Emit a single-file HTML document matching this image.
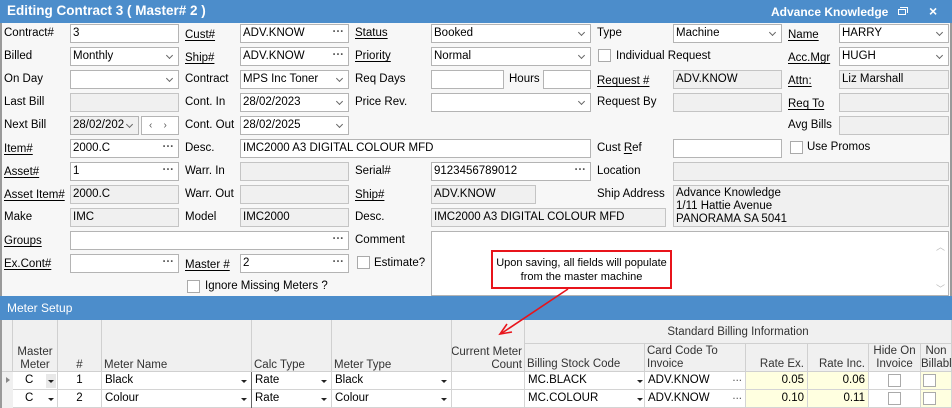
<!DOCTYPE html>
<html><head><meta charset="utf-8">
<style>
*{box-sizing:border-box;margin:0;padding:0}
body{width:952px;height:408px;overflow:hidden;background:#f7f7f7;font-family:"Liberation Sans",sans-serif;font-size:11.5px;color:#000;position:relative}
.a{position:absolute;white-space:nowrap}
.t{position:absolute;line-height:18px;white-space:nowrap}
.u{text-decoration:underline;text-underline-offset:2px}
.b{position:absolute;height:19px;background:#fff;border:1px solid #b4b4b4;line-height:17px;padding-left:2px;white-space:nowrap;overflow:hidden}
.g{background:#f0f0f0;border-color:#c4c4c4}
.dd::after{content:"";position:absolute;right:6px;top:5px;width:4px;height:4px;border-right:1.3px solid #666;border-bottom:1.3px solid #666;transform:rotate(45deg)}
.el::after{content:"···";position:absolute;right:4px;top:-1px;color:#555;font-weight:bold;letter-spacing:0px}
.cb{position:absolute;width:13px;height:13px;background:#fff;border:1px solid #aaa}
.h{position:absolute;background:#f0f0f0;border-right:1px solid #d0d0d0;border-bottom:1px solid #d0d0d0;color:#333;font-size:11.5px;line-height:13px;white-space:nowrap;overflow:hidden}
.c{position:absolute;height:18px;border-right:1px solid #d4d4d4;border-bottom:1px solid #d4d4d4;line-height:17px;padding:0 3px;background:#fff;white-space:nowrap}
.y{background:#ffffe0}
.sa{position:absolute;width:0;height:0;border-left:3px solid transparent;border-right:3px solid transparent;border-top:3px solid #222}
</style></head><body>
<div class="a" style="left:0;top:0;width:952px;height:23px;background:#4c8dcb"></div>
<div class="a" style="left:7px;top:3px;color:#fff;font-weight:bold;font-size:13.5px">Editing Contract 3 ( Master# 2 )</div>
<div class="a" style="left:771px;top:5px;color:#fff;font-weight:bold;font-size:12px">Advance Knowledge</div>
<div class="a" style="left:898px;top:9px;width:8px;height:6px;border:1.5px solid #fff"></div>
<div class="a" style="left:900px;top:7px;width:8px;height:6px;border-top:1.5px solid #fff;border-right:1.5px solid #fff"></div>
<div class="a" style="left:929px;top:3px;color:#fff;font-size:14px;font-weight:bold">×</div>
<div class="a" style="left:0;top:23px;width:2px;height:385px;background:#9a9a9a"></div>
<div class="a" style="left:950px;top:23px;width:2px;height:385px;background:#9a9a9a"></div>

<div class="t" style="left:4px;top:24px">Contract#</div>
<div class="t" style="left:4px;top:47px">Billed</div>
<div class="t" style="left:4px;top:70px">On Day</div>
<div class="t" style="left:4px;top:93px">Last Bill</div>
<div class="t" style="left:4px;top:116px">Next Bill</div>
<div class="t u" style="left:4px;top:140px">Item#</div>
<div class="t u" style="left:4px;top:163px">Asset#</div>
<div class="t u" style="left:4px;top:186px">Asset Item#</div>
<div class="t" style="left:4px;top:208px">Make</div>
<div class="t u" style="left:4px;top:232px">Groups</div>
<div class="t u" style="left:4px;top:255px">Ex.Cont#</div>

<div class="b" style="left:70px;top:24px;width:109px">3</div>
<div class="b dd" style="left:70px;top:47px;width:109px">Monthly</div>
<div class="b dd" style="left:70px;top:70px;width:109px"></div>
<div class="b g" style="left:70px;top:93px;width:109px"></div>
<div class="b dd" style="left:70px;top:116px;width:69px;background:#f0f0f0">28/02/202</div>
<div class="b" style="left:141px;top:116px;width:38px;color:#555;font-size:10px;padding-left:7px">‹&nbsp;&nbsp;&nbsp;&nbsp;›</div>
<div class="b el" style="left:70px;top:139px;width:109px">2000.C</div>
<div class="b el" style="left:70px;top:162px;width:109px">1</div>
<div class="b g" style="left:70px;top:185px;width:109px">2000.C</div>
<div class="b g" style="left:70px;top:208px;width:109px">IMC</div>
<div class="b el" style="left:70px;top:231px;width:279px"></div>
<div class="b el" style="left:70px;top:254px;width:109px"></div>

<div class="t u" style="left:185px;top:26px">Cust#</div>
<div class="t u" style="left:185px;top:49px">Ship#</div>
<div class="t" style="left:185px;top:70px">Contract</div>
<div class="t" style="left:185px;top:93px">Cont. In</div>
<div class="t" style="left:185px;top:116px">Cont. Out</div>
<div class="t" style="left:185px;top:139px">Desc.</div>
<div class="t" style="left:185px;top:162px">Warr. In</div>
<div class="t" style="left:185px;top:185px">Warr. Out</div>
<div class="t" style="left:185px;top:208px">Model</div>
<div class="t u" style="left:185px;top:256px">Master #</div>
<div class="b el" style="left:240px;top:24px;width:109px">ADV.KNOW</div>
<div class="b el" style="left:240px;top:47px;width:109px">ADV.KNOW</div>
<div class="b dd" style="left:240px;top:70px;width:109px">MPS Inc Toner</div>
<div class="b dd" style="left:240px;top:93px;width:109px">28/02/2023</div>
<div class="b dd" style="left:240px;top:116px;width:109px">28/02/2025</div>
<div class="b" style="left:240px;top:139px;width:351px">IMC2000 A3 DIGITAL COLOUR MFD</div>
<div class="b g" style="left:240px;top:162px;width:109px"></div>
<div class="b g" style="left:240px;top:185px;width:109px"></div>
<div class="b g" style="left:240px;top:208px;width:109px">IMC2000</div>
<div class="b el" style="left:240px;top:254px;width:109px">2</div>

<div class="t u" style="left:355px;top:24px">Status</div>
<div class="t u" style="left:355px;top:47px">Priority</div>
<div class="t" style="left:355px;top:70px">Req Days</div>
<div class="t" style="left:355px;top:93px">Price Rev.</div>
<div class="t" style="left:355px;top:162px">Serial#</div>
<div class="t u" style="left:355px;top:186px">Ship#</div>
<div class="t" style="left:355px;top:208px">Desc.</div>
<div class="t" style="left:355px;top:231px">Comment</div>
<div class="cb" style="left:357px;top:256px"></div>
<div class="t" style="left:374px;top:254px">Estimate?</div>
<div class="b dd" style="left:431px;top:24px;width:160px">Booked</div>
<div class="b dd" style="left:431px;top:47px;width:160px">Normal</div>
<div class="b" style="left:431px;top:70px;width:73px"></div>
<div class="t" style="left:509px;top:70px">Hours</div>
<div class="b" style="left:543px;top:70px;width:48px"></div>
<div class="b dd" style="left:431px;top:93px;width:160px"></div>
<div class="b el" style="left:431px;top:162px;width:160px">9123456789012</div>
<div class="b g" style="left:431px;top:185px;width:105px">ADV.KNOW</div>
<div class="b g" style="left:431px;top:208px;width:235px">IMC2000 A3 DIGITAL COLOUR MFD</div>
<div class="b" style="left:431px;top:231px;width:518px;height:65px"></div>
<div class="a" style="left:936px;top:240px;color:#bbb;font-size:9px">︿</div>
<div class="a" style="left:936px;top:282px;color:#bbb;font-size:9px">﹀</div>

<div class="t" style="left:597px;top:24px">Type</div>
<div class="cb" style="left:598px;top:49px"></div>
<div class="t" style="left:616px;top:47px">Individual Request</div>
<div class="t u" style="left:597px;top:72px">Request #</div>
<div class="t" style="left:597px;top:93px">Request By</div>
<div class="t" style="left:597px;top:139px">Cust <span class="u">R</span>ef</div>
<div class="t" style="left:597px;top:162px">Location</div>
<div class="t" style="left:597px;top:185px">Ship Address</div>
<div class="b dd" style="left:673px;top:24px;width:109px">Machine</div>
<div class="b g" style="left:673px;top:70px;width:109px">ADV.KNOW</div>
<div class="b g" style="left:673px;top:93px;width:109px"></div>
<div class="b" style="left:673px;top:139px;width:109px"></div>
<div class="b g" style="left:673px;top:162px;width:276px"></div>
<div class="b g" style="left:673px;top:185px;width:276px;height:42px;line-height:13px;padding-top:1px;white-space:pre">Advance Knowledge
1/11 Hattie Avenue
PANORAMA SA 5041</div>

<div class="t u" style="left:788px;top:26px">Name</div>
<div class="t u" style="left:788px;top:49px">Acc.Mgr</div>
<div class="t u" style="left:788px;top:72px">Attn:</div>
<div class="t u" style="left:788px;top:95px">Req To</div>
<div class="t" style="left:788px;top:116px">Avg Bills</div>
<div class="cb" style="left:790px;top:141px"></div>
<div class="t" style="left:807px;top:138px">Use Promos</div>
<div class="b dd" style="left:839px;top:24px;width:110px">HARRY</div>
<div class="b dd" style="left:839px;top:47px;width:110px">HUGH</div>
<div class="b g" style="left:839px;top:70px;width:110px">Liz Marshall</div>
<div class="b g" style="left:839px;top:93px;width:110px"></div>
<div class="b g" style="left:839px;top:116px;width:110px"></div>

<div class="cb" style="left:187px;top:280px"></div>
<div class="t" style="left:205px;top:277px">Ignore Missing Meters ?</div>

<div class="a" style="left:491px;top:250px;width:181px;height:39px;border:2px solid #e8141b;background:#fff;text-align:center;line-height:14px;font-size:11px;padding-top:4px;white-space:normal">Upon saving, all fields will populate<br>from the master machine</div>

<div class="a" style="left:0;top:296px;width:952px;height:24px;background:#4c8dcb"></div>
<div class="a" style="left:7px;top:301px;color:#fff;font-size:12px">Meter Setup</div>
<div class="a" style="left:0;top:320px;width:952px;height:88px;background:#f0f0f0;border-left:2px solid #9a9a9a"></div>

<div class="h" style="left:2px;top:320px;width:11px;height:52px"></div>
<div class="h" style="left:13px;top:320px;width:45px;height:52px;text-align:center;padding-top:26px">Master<br>Meter</div>
<div class="h" style="left:58px;top:320px;width:44px;height:52px;text-align:center;padding-top:39px">#</div>
<div class="h" style="left:102px;top:320px;width:150px;height:52px;padding:39px 0 0 2px">Meter Name</div>
<div class="h" style="left:252px;top:320px;width:80px;height:52px;padding:39px 0 0 2px">Calc Type</div>
<div class="h" style="left:332px;top:320px;width:120px;height:52px;padding:39px 0 0 2px">Meter Type</div>
<div class="h" style="left:452px;top:320px;width:73px;height:52px;padding-top:26px"><div style="position:absolute;right:2px;top:26px;text-align:right">Current Meter<br>Count</div></div>
<div class="h" style="left:525px;top:320px;width:427px;height:24px;text-align:center;padding-top:6px">Standard Billing Information</div>
<div class="h" style="left:525px;top:344px;width:120px;height:28px;padding:14px 0 0 2px">Billing Stock Code</div>
<div class="h" style="left:645px;top:344px;width:101px;height:28px;padding:1px 0 0 2px">Card Code To<br>Invoice</div>
<div class="h" style="left:746px;top:344px;width:62px;height:28px;text-align:right;padding:14px 3px 0 0">Rate Ex.</div>
<div class="h" style="left:808px;top:344px;width:61px;height:28px;text-align:right;padding:14px 3px 0 0">Rate Inc.</div>
<div class="h" style="left:869px;top:344px;width:52px;height:28px;text-align:center;padding-top:1px">Hide On<br>Invoice</div>
<div class="h" style="left:921px;top:344px;width:31px;height:28px;text-align:center;padding-top:1px">Non<br>Billable</div>

<div class="a" style="left:6px;top:377px;width:0;height:0;border-top:3px solid transparent;border-bottom:3px solid transparent;border-left:4px solid #888"></div>

<div class="c" style="left:13px;top:372px;width:45px;padding-left:12px">C</div>
<div class="c" style="left:58px;top:372px;width:44px;text-align:center">1</div>
<div class="c" style="left:102px;top:372px;width:150px">Black</div>
<div class="c" style="left:252px;top:372px;width:80px">Rate</div>
<div class="c" style="left:332px;top:372px;width:120px">Black</div>
<div class="c" style="left:452px;top:372px;width:73px"></div>
<div class="c" style="left:525px;top:372px;width:120px">MC.BLACK</div>
<div class="c" style="left:645px;top:372px;width:101px">ADV.KNOW<span style="position:absolute;right:3px;top:-2px;color:#555">...</span></div>
<div class="c y" style="left:746px;top:372px;width:62px;text-align:right">0.05</div>
<div class="c y" style="left:808px;top:372px;width:61px;text-align:right">0.06</div>
<div class="c" style="left:869px;top:372px;width:52px"></div>
<div class="c y" style="left:921px;top:372px;width:31px"></div>

<div class="c" style="left:13px;top:390px;width:45px;padding-left:12px">C</div>
<div class="c" style="left:58px;top:390px;width:44px;text-align:center">2</div>
<div class="c" style="left:102px;top:390px;width:150px">Colour</div>
<div class="c" style="left:252px;top:390px;width:80px">Rate</div>
<div class="c" style="left:332px;top:390px;width:120px">Colour</div>
<div class="c" style="left:452px;top:390px;width:73px"></div>
<div class="c" style="left:525px;top:390px;width:120px">MC.COLOUR</div>
<div class="c" style="left:645px;top:390px;width:101px">ADV.KNOW<span style="position:absolute;right:3px;top:-2px;color:#555">...</span></div>
<div class="c y" style="left:746px;top:390px;width:62px;text-align:right">0.10</div>
<div class="c y" style="left:808px;top:390px;width:61px;text-align:right">0.11</div>
<div class="c" style="left:869px;top:390px;width:52px"></div>
<div class="c y" style="left:921px;top:390px;width:31px"></div>

<div class="a" style="left:251px;top:372px;width:1px;height:36px;background:#666"></div>
<div class="a" style="left:46px;top:374px;width:10px;height:14px;background:#e8e8e8"></div>
<div class="sa" style="left:48px;top:380px"></div><div class="sa" style="left:48px;top:398px"></div>
<div class="sa" style="left:241px;top:380px"></div><div class="sa" style="left:241px;top:398px"></div>
<div class="sa" style="left:321px;top:380px"></div><div class="sa" style="left:321px;top:398px"></div>
<div class="sa" style="left:441px;top:380px"></div><div class="sa" style="left:441px;top:398px"></div>
<div class="sa" style="left:637px;top:380px"></div><div class="sa" style="left:637px;top:398px"></div>
<div class="cb" style="left:888px;top:374px"></div><div class="cb" style="left:888px;top:392px"></div>
<div class="cb" style="left:923px;top:374px"></div><div class="cb" style="left:923px;top:392px"></div>

<svg class="a" style="left:0;top:0" width="952" height="408">
<line x1="568" y1="289" x2="502" y2="333" stroke="#e8141b" stroke-width="1.6"/>
<polyline points="507,324 500,334 512,332" fill="none" stroke="#e8141b" stroke-width="1.6"/>
</svg>
</body></html>
